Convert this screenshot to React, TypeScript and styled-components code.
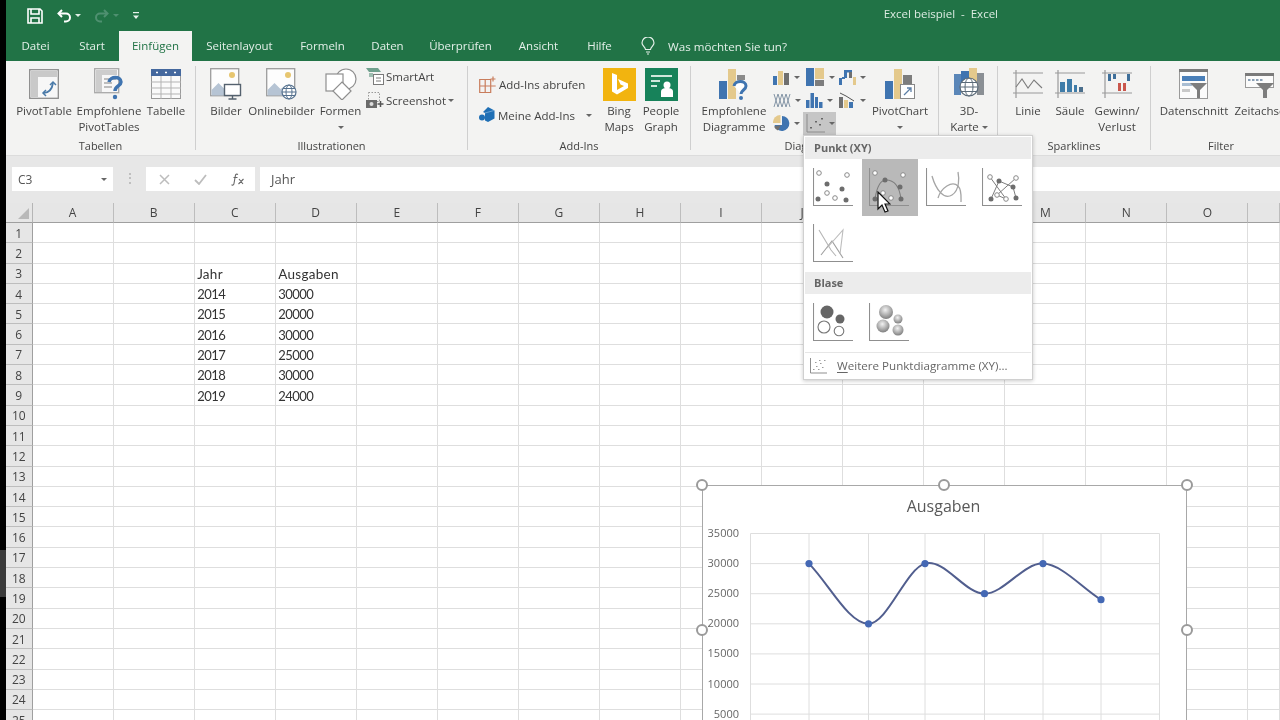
import React from 'react'
import styled, {createGlobalStyle} from 'styled-components'

const GlobalStyle = createGlobalStyle`
    html, body {
        margin: 0;
        padding: 0;
        background: #000;
    }
    * {
        box-sizing: border-box;
    }
`

const UI_FONT = '"Open Sans", "Noto Sans", "Liberation Sans", sans-serif'
const CELL_FONT = 'Lato, "Open Sans", sans-serif'
const GREEN = '#217346'
const RIBBON = '#f3f3f2'

const Screen = styled.div`
    position: relative;
    display: flex;
    width: 1280px;
    height: 720px;
    overflow: hidden;
    background: #fff;
    font-family: ${UI_FONT};
    filter: blur(0.5px);
`

const LeftStrip = styled.div`
    flex: none;
    width: 6px;
    background: #000;
`

const StripMark = styled.div`
    width: 100%;
    height: 47px;
    margin-top: 550px;
    background: #3a3a3a;
`

const Main = styled.div`
    flex: 1;
    min-width: 0;
    display: flex;
    flex-direction: column;
`

/* title bar */
const TitleBar = styled.div`
    flex: none;
    height: 31px;
    display: flex;
    align-items: center;
    padding-left: 21px;
    background: ${GREEN};
`

const Qat = styled.div`
    display: flex;
    align-items: center;
`

const TitleText = styled.div`
    margin-left: auto;
    margin-right: 282px;
    font-size: 11.5px;
    color: #dcebe2;
    white-space: pre;
    padding-bottom: 5px;
`

const Caret = styled.span<{$color?: string; $size?: number}>`
    display: inline-block;
    flex: none;
    width: 0;
    height: 0;
    border-left: ${p => p.$size ?? 3}px solid transparent;
    border-right: ${p => p.$size ?? 3}px solid transparent;
    border-top: ${p => p.$size ?? 3}px solid ${p => p.$color ?? '#666'};
`

const Spacer = styled.span<{$w: number}>`
    display: inline-block;
    width: ${p => p.$w}px;
`

/* tabs */
const TabBar = styled.div`
    flex: none;
    height: 30px;
    display: flex;
    align-items: stretch;
    background: ${GREEN};
`

const Tab = styled.div<{$w: number; $active?: boolean}>`
    width: ${p => p.$w}px;
    display: flex;
    align-items: center;
    justify-content: center;
    padding-bottom: 1px;
    font-size: 11.5px;
    color: ${p => (p.$active ? '#217346' : '#e3efe8')};
    background: ${p => (p.$active ? RIBBON : 'transparent')};
`

const TellMe = styled.div`
    display: flex;
    align-items: center;
    gap: 13px;
    margin-left: 15px;
    font-size: 11.6px;
    color: #e3efe8;
`

/* ribbon */
const Ribbon = styled.div`
    flex: none;
    height: 94px;
    display: flex;
    padding-top: 5px;
    background: ${RIBBON};
    color: #444;
    font-size: 11.5px;
`

const Group = styled.div<{$w: number}>`
    flex: none;
    width: ${p => p.$w}px;
    display: flex;
    flex-direction: column;
`

const GroupBody = styled.div<{$pad: number}>`
    height: 72px;
    display: flex;
    padding-left: ${p => p.$pad}px;
`

const GroupLabel = styled.div`
    height: 16px;
    line-height: 16px;
    text-align: center;
    font-size: 11px;
    color: #444;
    white-space: nowrap;
`

const Divider = styled.div`
    flex: none;
    width: 1px;
    height: 84px;
    background: #cfcfcf;
`

const LargeButton = styled.div<{$w: number}>`
    flex: none;
    width: ${p => p.$w}px;
    display: flex;
    flex-direction: column;
    align-items: center;
    white-space: nowrap;
    line-height: 16px;
`

const IconSlot = styled.div`
    height: 32px;
    margin: 2px 0 3px;
    display: flex;
    align-items: center;
    justify-content: center;
`

const CaretLine = styled.div`
    height: 16px;
    display: flex;
    align-items: center;
`

const SmallStack = styled.div<{$top: number; $gap: number; $w: number; $left?: number}>`
    flex: none;
    width: ${p => p.$w}px;
    display: flex;
    flex-direction: column;
    gap: ${p => p.$gap}px;
    padding-top: ${p => p.$top}px;
    padding-left: ${p => p.$left ?? 0}px;
`

const SmallButton = styled.div<{$iconGap?: number}>`
    height: 20px;
    display: flex;
    align-items: center;
    gap: ${p => p.$iconGap ?? 3}px;
    white-space: nowrap;
`

const ChartGrid = styled.div`
    flex: none;
    width: 99px;
    display: grid;
    grid-template-columns: repeat(3, 33px);
    grid-auto-rows: 23px;
    margin-left: 1px;
`

const ChartCell = styled.div<{$on?: boolean}>`
    display: flex;
    align-items: center;
    gap: 4px;
    padding-left: 3px;
    background: ${p => (p.$on ? '#c6c6c6' : 'transparent')};
`

/* formula bar */
const FormulaBar = styled.div`
    flex: none;
    height: 48px;
    display: flex;
    align-items: flex-start;
    padding: 11px 0 0 6px;
    background: #e7e7e7;
    border-top: 1px solid #dcdcdc;
`

const NameBox = styled.div`
    width: 101px;
    height: 24px;
    display: flex;
    align-items: center;
    justify-content: space-between;
    padding: 1px 6px 0;
    background: #fff;
    font-size: 12px;
    color: #555;
`

const Dots = styled.div`
    width: 33px;
    text-align: center;
    color: #aaa;
    font-size: 12px;
    line-height: 22px;
`

const FxBox = styled.div`
    width: 109px;
    height: 24px;
    display: flex;
    align-items: center;
    gap: 24px;
    padding-left: 13px;
    background: #fff;
`

const FormulaInput = styled.div`
    flex: 1;
    height: 24px;
    margin-left: 5px;
    padding-left: 11px;
    line-height: 25px;
    background: #fff;
    font-size: 13px;
    color: #555;
`

/* sheet */
const Sheet = styled.div`
    flex: 1;
    min-height: 0;
    display: grid;
    grid-template-columns: 26.5px repeat(15, 81.07px) 1fr;
    grid-template-rows: 20px;
    grid-auto-rows: 20.3px;
    background: #fff;
    overflow: hidden;
`

const Corner = styled.div`
    position: relative;
    background: #e6e6e6;
    border-right: 1px solid #b5b5b5;
    border-bottom: 1px solid #9f9f9f;

    &::after {
        content: '';
        position: absolute;
        right: 3px;
        bottom: 3px;
        border-left: 11px solid transparent;
        border-bottom: 11px solid #b9b9b9;
    }
`

const ColHead = styled.div`
    display: flex;
    align-items: center;
    justify-content: center;
    background: #e6e6e6;
    border-right: 1px solid #bdbdbd;
    border-bottom: 1px solid #9f9f9f;
    font-size: 12px;
    color: #444;
`

const RowHead = styled.div`
    display: flex;
    align-items: center;
    justify-content: center;
    padding-top: 1px;
    background: #e6e6e6;
    border-right: 1px solid #9f9f9f;
    border-bottom: 1px solid #bdbdbd;
    font-size: 12px;
    color: #444;
`

const Cell = styled.div<{$num?: boolean}>`
    display: flex;
    align-items: center;
    padding: 1px 0 0 2.5px;
    border-right: 1px solid #dedede;
    border-bottom: 1px solid #dedede;
    font-family: ${CELL_FONT};
    font-size: ${p => (p.$num ? 13 : 13.5)}px;
    letter-spacing: ${p => (p.$num ? -0.5 : 0.3)}px;
    color: #333;
    white-space: nowrap;
`

/* scatter gallery */
const Gallery = styled.div`
    position: absolute;
    left: 803px;
    top: 135px;
    width: 230px;
    height: 245px;
    padding: 1px;
    background: #fff;
    border: 1px solid #d0d0d0;
    box-shadow: 0 1px 4px rgba(0, 0, 0, 0.22);
`

const GalleryHead = styled.div`
    height: 22px;
    padding-left: 9px;
    line-height: 22px;
    font-size: 11px;
    font-weight: 700;
    color: #666;
    background: #ececec;
`

const TileRow = styled.div`
    display: grid;
    grid-template-columns: repeat(4, 56.5px);
    grid-auto-rows: 56.5px;
`

const Tile = styled.div<{$on?: boolean}>`
    position: relative;
    display: flex;
    align-items: center;
    justify-content: center;
    background: ${p => (p.$on ? '#b9b9b9' : 'transparent')};
`

const Pointer = styled.svg`
    position: absolute;
    left: 15px;
    top: 32px;
`

const GalleryFoot = styled.div`
    height: 27px;
    margin-top: 1px;
    display: flex;
    align-items: center;
    gap: 9px;
    padding-left: 5px;
    border-top: 1px solid #e6e6e6;
    font-size: 11.6px;
    color: #666;

    u {
        text-underline-offset: 2px;
    }
`

/* chart */
const ChartFrame = styled.div`
    position: absolute;
    left: 702px;
    top: 485px;
    width: 485px;
    height: 300px;
    background: #fff;
    border: 1.5px solid #a8a8a8;
`

const ChartTitle = styled.div`
    height: 40px;
    line-height: 41px;
    text-align: center;
    font-size: 16px;
    color: #595959;
    margin-right: 2px;
`

const Handle = styled.div<{$x: number; $y: number}>`
    position: absolute;
    left: ${p => p.$x - 6}px;
    top: ${p => p.$y - 6}px;
    width: 12px;
    height: 12px;
    border-radius: 50%;
    background: #fff;
    border: 2px solid #9a9a9a;
`

/* ------ icons ------ */
const BLUE = '#3f74b0'
const TAN = '#e4c98c'

const SaveIcon = () => (
    <svg width="16" height="16" viewBox="0 0 16 16" fill="none" stroke="#fff" strokeWidth="1.6">
        <path d="M1 1h12l2 2v12H1z" />
        <path d="M4 1v5h8V1M4 15v-5h8v5" />
    </svg>
)

const UndoIcon = ({color}: {color: string}) => (
    <svg width="15" height="14" viewBox="0 0 15 14" fill="none" stroke={color} strokeWidth="2">
        <path d="M5 1 1.5 4.5 5 8" />
        <path d="M2 4.5h7a4 4 0 0 1 0 8H7" />
    </svg>
)

const RedoIcon = ({color}: {color: string}) => (
    <svg width="15" height="14" viewBox="0 0 15 14" fill="none" stroke={color} strokeWidth="2">
        <path d="M10 1l3.5 3.5L10 8" />
        <path d="M13 4.5H6a4 4 0 0 0 0 8h2" />
    </svg>
)

const CustomizeIcon = () => (
    <svg width="6" height="8" viewBox="0 0 6 8" fill="#e8f2ec">
        <rect x="0" y="0" width="6" height="1.2" />
        <path d="M0 3.5h6L3 7z" />
    </svg>
)

const BulbIcon = () => (
    <svg width="14" height="18" viewBox="0 0 14 18" fill="none" stroke="#e3efe8" strokeWidth="1.2">
        <path d="M4.5 12.5C4 10 1 8.5 1 6a6 6 0 0 1 12 0c0 2.5-3 4-3.5 6.5z" />
        <path d="M5 15h4M6 17h2" />
    </svg>
)

const PivotIcon = () => (
    <svg width="30" height="30" viewBox="0 0 30 30" fill="none">
        <rect x=".7" y=".7" width="28.6" height="28.6" fill="#f7f7f7" stroke="#8c8c8c" strokeWidth="1.3" />
        <path d="M2 2h26v6H2zM2 8h7v20H2z" fill="#c9c9c9" />
        <path d="M14 24c6 0 9-3 10-10" stroke="#4a7aa8" strokeWidth="1.8" />
        <path d="M21 16l3-3 3 3M17 21l-3 3 3 3" stroke="#4a7aa8" strokeWidth="1.5" />
    </svg>
)

const RecommendIcon = () => (
    <svg width="30" height="32" viewBox="0 0 30 32" fill="none">
        <rect x=".7" y=".7" width="24" height="24" fill="#f7f7f7" stroke="#a8a8a8" strokeWidth="1.3" />
        <path d="M2 2h21v5H2zM2 7h6v17H2z" fill="#cdcdcd" />
        <path d="M10 11h12M10 15h8M10 19h8" stroke="#bdbdbd" strokeWidth="2" />
        <path d="M15 14c1-6 12-6 12 0 0 4-6 4-6 9" stroke="#3f74b0" strokeWidth="3.5" />
        <circle cx="21" cy="29" r="2.2" fill="#3f74b0" />
    </svg>
)

const TableIcon = () => (
    <svg width="30" height="30" viewBox="0 0 30 30" fill="none">
        <rect x=".5" y=".5" width="29" height="29" fill="#fafafa" stroke="#9a9a9a" />
        <rect x="0" y="0" width="30" height="7" fill="#44689e" />
        <path d="M5 3.5h2M14 3.5h2M23 3.5h2" stroke="#fff" strokeWidth="1.5" />
        <path d="M0 13h30M0 19h30M0 25h30M10 7v23M20 7v23" stroke="#b3b3b3" />
    </svg>
)

const PictureBase = () => (
    <>
        <rect x=".7" y=".7" width="28" height="27" fill="#fdfdfd" stroke="#9c9c9c" strokeWidth="1.3" />
        <circle cx="22" cy="7" r="3" fill="#e7c670" />
        <path d="M1.5 27.5V22l7-7 6 6 3-2 4 8.5z" fill="#b6c4d4" />
    </>
)

const PicturesIcon = () => (
    <svg width="32" height="32" viewBox="0 0 32 32" fill="none">
        <PictureBase />
        <rect x="14.5" y="16.5" width="16" height="11" fill="#fff" stroke="#54616e" strokeWidth="1.4" />
        <path d="M22.5 28v3M18.5 31h8" stroke="#54616e" strokeWidth="1.4" />
    </svg>
)

const OnlinePicturesIcon = () => (
    <svg width="32" height="32" viewBox="0 0 32 32" fill="none">
        <PictureBase />
        <circle cx="23" cy="24" r="7" fill="#fff" stroke="#54708e" strokeWidth="1.2" />
        <ellipse cx="23" cy="24" rx="3" ry="7" stroke="#54708e" />
        <path d="M16 24h14M17 20.5h12M17 27.5h12" stroke="#54708e" />
    </svg>
)

const ShapesIcon = () => (
    <svg width="32" height="32" viewBox="0 0 32 32" fill="none" stroke="#8f8f8f" strokeWidth="1.2">
        <circle cx="21" cy="11" r="10" fill="#fff" />
        <rect x="1" y="6" width="17" height="17" fill="#fff" />
        <path d="M17 14l9 9-9 9-9-9z" fill="#fff" />
    </svg>
)

const SmartArtIcon = () => (
    <svg width="18" height="18" viewBox="0 0 18 18" fill="none">
        <path d="M0 1h12l3 4H3z" fill="#6fa08d" />
        <path d="M3 6h4v4H3z" fill="#9dbdb0" />
        <rect x="7.5" y="7.5" width="10" height="10" fill="#fff" stroke="#7a7a7a" />
        <path d="M10 11h5M10 14h5" stroke="#7a7a7a" />
    </svg>
)

const ScreenshotIcon = () => (
    <svg width="18" height="18" viewBox="0 0 18 18" fill="none">
        <rect x="2.5" y="1.5" width="11" height="9" stroke="#999" strokeDasharray="1.5 1.5" />
        <rect x="0" y="9" width="11" height="8" fill="#6b6b6b" />
        <circle cx="5.5" cy="13" r="2" fill="#ddd" />
        <path d="M14.5 10v6M11.5 13h6" stroke="#555" strokeWidth="1.5" />
    </svg>
)

const AddInStoreIcon = () => (
    <svg width="17" height="17" viewBox="0 0 17 17" fill="none" stroke="#c97d5c" strokeWidth="1.2">
        <path d="M.7 3.5h11v13H.7zM.7 10h11M6.2 3.5v13M11.7 10h5M14 .5v5M11.5 3h5" />
    </svg>
)

const MyAddInIcon = () => (
    <svg width="16" height="16" viewBox="0 0 16 16">
        <path d="M9 0l6.5 3.5v8L9 15l-3-1.5V6l-2-1z" fill="#1f6fb5" />
        <circle cx="3" cy="10.5" r="3" fill="#1f6fb5" />
        <path d="M6 6l9-2.5" stroke="#7fb0dc" strokeWidth=".8" />
    </svg>
)

const BingTile = () => (
    <svg width="33" height="33" viewBox="0 0 33 33">
        <rect width="33" height="33" fill="#f2b40f" />
        <path d="M9 5l5 2v15l7-4-3.5-1.5L15 11l10 4.5V20l-11 6.5-5-3z" fill="#fff" />
    </svg>
)

const PeopleTile = () => (
    <svg width="33" height="33" viewBox="0 0 33 33">
        <rect width="33" height="33" fill="#17825a" />
        <path d="M6 7h21v2H6zM6 12h9v2H6zM6 17h6v2H6z" fill="#cfe7dc" />
        <circle cx="22" cy="17" r="3.5" fill="#fff" />
        <path d="M16 29v-5c0-3 2-4 6-4s6 1 6 4v5z" fill="#fff" />
    </svg>
)

const BigBars = () => (
    <>
        <rect x="0" y="13" width="8" height="18" fill={BLUE} />
        <rect x="9" y="1" width="8" height="30" fill={TAN} />
    </>
)

const RecommendChartIcon = () => (
    <svg width="30" height="32" viewBox="0 0 30 32" fill="none">
        <BigBars />
        <rect x="18" y="7" width="8" height="5" fill="#8a8a8a" />
        <path d="M15 18c1-6 12-6 12 0 0 4-5 4-5 8" stroke="#3f74b0" strokeWidth="3" fill="#fff" />
        <circle cx="22" cy="30" r="2" fill="#3f74b0" />
    </svg>
)

const PivotChartIcon = () => (
    <svg width="30" height="32" viewBox="0 0 30 32" fill="none">
        <BigBars />
        <rect x="18" y="7" width="9" height="10" fill="#7d7d7d" />
        <rect x="15.5" y="16.5" width="14" height="14" fill="#fff" stroke="#888" />
        <path d="M19 27l7-7M22 20h4v4" stroke="#5c7fa6" strokeWidth="1.3" />
    </svg>
)

const MiniColumns = () => (
    <svg width="17" height="17" viewBox="0 0 17 17">
        <rect x="0" y="7" width="4" height="9" fill={BLUE} />
        <rect x="5" y="2" width="5" height="14" fill={TAN} />
        <rect x="11" y="4" width="5" height="12" fill="#6f6f6f" />
    </svg>
)

const MiniTreemap = () => (
    <svg width="19" height="19" viewBox="0 0 19 19">
        <rect x="0" y="0" width="8" height="18" fill={BLUE} />
        <rect x="9" y="0" width="9" height="11" fill={TAN} />
        <rect x="9" y="12" width="9" height="6" fill="#7d7d7d" />
    </svg>
)

const MiniWaterfall = () => (
    <svg width="17" height="17" viewBox="0 0 17 17">
        <rect x="0" y="9" width="3" height="7" fill={BLUE} />
        <rect x="3" y="8" width="3" height="2" fill={BLUE} />
        <rect x="5" y="1" width="3" height="8" fill={BLUE} />
        <rect x="8" y="1" width="5" height="2.5" fill={BLUE} />
        <rect x="10" y="3" width="3" height="6" fill="#6f6f6f" />
        <rect x="14" y="8" width="3" height="8" fill={TAN} />
    </svg>
)

const MiniStock = () => (
    <svg width="18" height="17" viewBox="0 0 18 17" fill="none" stroke="#8495a6" strokeWidth="1">
        <path d="M1 2l4 13 4-13 4 13 4-13M1 15l4-13 4 13 4-13 4 13" />
    </svg>
)

const MiniHisto = () => (
    <svg width="17" height="17" viewBox="0 0 17 17" fill={BLUE}>
        <rect x="0" y="8" width="3.5" height="8" />
        <rect x="4.5" y="1" width="3.5" height="15" />
        <rect x="9" y="5" width="3" height="11" />
        <rect x="13" y="10" width="3.5" height="6" />
    </svg>
)

const MiniPareto = () => (
    <svg width="17" height="17" viewBox="0 0 17 17">
        <rect x="0" y="5" width="4" height="11" fill="#6f6f6f" />
        <rect x="5" y="8" width="4" height="8" fill={TAN} />
        <rect x="10" y="10" width="4" height="6" fill={BLUE} />
        <path d="M1 1l6 3 8 5" fill="none" stroke="#555" />
    </svg>
)

const MiniPie = () => (
    <svg width="17" height="17" viewBox="0 0 17 17">
        <path d="M9 1a7.5 7.5 0 1 1-7.5 9H9z" fill={BLUE} />
        <path d="M7.5 0v8H0A7.5 7.5 0 0 1 7.5 0z" fill={TAN} />
        <path d="M1 11.5A7 7 0 0 0 5 15.5L8 10z" fill="#6f6f6f" />
    </svg>
)

const MiniScatter = () => (
    <svg width="19" height="19" viewBox="0 0 19 19" fill="#666">
        <path d="M1 0v18h18" fill="none" stroke="#8c8c8c" />
        <rect x="4" y="13" width="2" height="1.5" />
        <rect x="9" y="7" width="2" height="1.5" />
        <rect x="13" y="10" width="2" height="1.5" />
        <rect x="15" y="4" width="2" height="1.5" />
    </svg>
)

const MapIcon = () => (
    <svg width="30" height="32" viewBox="0 0 30 32" fill="none">
        <rect x="0" y="6" width="7" height="21" fill="#5a86b8" />
        <rect x="23" y="5" width="7" height="22" fill="#8a8f94" />
        <rect x="7" y="3" width="8" height="15" fill={BLUE} />
        <rect x="15" y="0" width="8" height="16" fill={TAN} />
        <circle cx="15" cy="19" r="9" fill="#fff" stroke="#5a6a78" strokeWidth="1.2" />
        <ellipse cx="15" cy="19" rx="4" ry="9" stroke="#5a6a78" />
        <path d="M6 19h18M7.5 14.5h15M7.5 23.5h15" stroke="#5a6a78" />
    </svg>
)

const SparkFrame = () => (
    <path d="M0 4h30M0 24h30M3 1v28" fill="none" stroke="#9a9a9a" strokeWidth="1.2" />
)

const SparkLine = () => (
    <svg width="30" height="30" viewBox="0 0 30 30" fill="none">
        <SparkFrame />
        <path d="M3 18l6-8 6 9 6-8 8 8" stroke="#7c7c7c" strokeWidth="1.1" />
    </svg>
)

const SparkColumn = () => (
    <svg width="30" height="30" viewBox="0 0 30 30" fill="none">
        <SparkFrame />
        <rect x="5" y="13" width="5" height="10" fill="#3f7ca8" />
        <rect x="12" y="10" width="5" height="13" fill="#3f7ca8" />
        <rect x="19" y="16" width="3" height="7" fill="#3f7ca8" />
        <rect x="24" y="18" width="4" height="5" fill="#4a6e8c" />
    </svg>
)

const SparkWinLoss = () => (
    <svg width="30" height="30" viewBox="0 0 30 30" fill="none">
        <SparkFrame />
        <path d="M6 5h3v7H6zM11 5h3v5h-3zM25 5h3v7h-3z" fill="#3f6f9a" />
        <path d="M16 14h3v8h-3zM21 14h3v8h-3z" fill="#c9564c" />
    </svg>
)

const SlicerIcon = () => (
    <svg width="30" height="30" viewBox="0 0 30 30" fill="none">
        <rect x=".5" y=".5" width="28" height="29" fill="#fbfbfb" stroke="#9a9a9a" />
        <rect x="0" y="0" width="29" height="3" fill="#7a7a7a" />
        <rect x="3" y="7" width="23" height="5" fill="#4a7fb8" />
        <rect x="3" y="14" width="10" height="3" fill="#a9bdd2" />
        <rect x="3" y="20" width="8" height="3" fill="#c9c9c9" />
        <path d="M11 14h17l-7 7v8h-3v-8z" fill="#7d7d7d" />
    </svg>
)

const TimelineIcon = () => (
    <svg width="30" height="30" viewBox="0 0 30 30" fill="none">
        <rect x=".5" y="4.5" width="28" height="14" fill="#fbfbfb" stroke="#9a9a9a" />
        <rect x="0" y="4" width="29" height="3" fill="#7a7a7a" />
        <path d="M3 11h16" stroke="#8a9fb5" strokeWidth="2" strokeDasharray="2.5 1.5" />
        <path d="M11 14h18l-7 7v8h-4v-8z" fill="#7d7d7d" />
    </svg>
)

const Axis = () => <path d="M.5 0v37.5H40" fill="none" stroke="#8f8f8f" strokeWidth="1.1" />

const Dot = ({x, y, open}: {x: number; y: number; open?: boolean}) => (
    <circle
        cx={x}
        cy={y}
        r={open ? 2.3 : 2.5}
        fill={open ? '#fff' : '#6d6d6d'}
        stroke={open ? '#8a8a8a' : 'none'}
        strokeWidth="1"
    />
)

const PlotIcon: React.FC<{children?: React.ReactNode}> = ({children}) => (
    <svg width="41" height="39" viewBox="0 0 41 39" fill="none">
        <Axis />
        {children}
    </svg>
)

const openPts = [[6, 5], [34, 7], [14, 25], [22, 30]]
const solidPts = [[14, 16], [29, 21], [5, 31], [33, 32]]

const ScatterDots = () => (
    <PlotIcon>
        {openPts.map(([x, y]) => <Dot key={x} x={x} y={y} open />)}
        {solidPts.map(([x, y]) => <Dot key={x} x={x} y={y} />)}
    </PlotIcon>
)

const ScatterSmooth = () => (
    <PlotIcon>
        <path d="M6 31C8 18 12 12 17 12c6 0 13 3 15 19" stroke="#7d7d7d" strokeWidth="1.1" />
        {openPts.map(([x, y]) => <Dot key={x} x={x} y={y} open />)}
        <Dot x={16} y={12} />
        <Dot x={31} y={19} />
        <Dot x={6} y={31} />
        <Dot x={32} y={31} />
    </PlotIcon>
)

const ScatterCurves = () => (
    <PlotIcon>
        <path d="M6 8c4 14 12 24 20 19 8-5 7-18 6-23" stroke="#a5a5a5" strokeWidth="1.3" />
        <path d="M12 30c3-10 14-18 20-12 4 4 3 12 3 16" stroke="#a5a5a5" strokeWidth="1.3" />
    </PlotIcon>
)

const ScatterLines = () => (
    <PlotIcon>
        <path d="M9 31 17 13 31 19 34 30" stroke="#7d7d7d" />
        <path d="M8 9l16 22-9-4L34 10" stroke="#7d7d7d" />
        <Dot x={8} y={9} open />
        <Dot x={34} y={10} open />
        <Dot x={15} y={27} open />
        <Dot x={24} y={31} open />
        <Dot x={17} y={13} />
        <Dot x={31} y={19} />
        <Dot x={9} y={31} />
        <Dot x={34} y={30} />
    </PlotIcon>
)

const ScatterStraight = () => (
    <PlotIcon>
        <path d="M6 6l12 20 5 6" stroke="#b5b5b5" strokeWidth="1.1" />
        <path d="M8 31 19 17l11 17" stroke="#a0a0a0" strokeWidth="1.1" />
        <path d="M14 24l16-18-3 24" stroke="#bdbdbd" strokeWidth="1.1" />
    </PlotIcon>
)

const BubbleFlat = () => (
    <PlotIcon>
        <circle cx="14" cy="9" r="6.5" fill="#666" />
        <circle cx="27" cy="16" r="4.5" fill="#666" />
        <circle cx="11" cy="24" r="6" fill="#fff" stroke="#777" strokeWidth="1.1" />
        <circle cx="26" cy="28" r="4.8" fill="#fff" stroke="#777" strokeWidth="1.1" />
    </PlotIcon>
)

const BubbleBall = () => (
    <PlotIcon>
        <defs>
            <radialGradient id="ball" cx="45%" cy="35%" r="65%">
                <stop offset="0%" stopColor="#f2f2f2" />
                <stop offset="100%" stopColor="#7f7f7f" />
            </radialGradient>
        </defs>
        <circle cx="17" cy="9" r="7" fill="url(#ball)" />
        <circle cx="29" cy="16" r="4.5" fill="url(#ball)" />
        <circle cx="14" cy="23" r="6.5" fill="url(#ball)" />
        <circle cx="29" cy="27" r="5.5" fill="url(#ball)" />
    </PlotIcon>
)

const MoreScatterIcon = () => (
    <svg width="18" height="17" viewBox="0 0 18 17" fill="#9a9a9a">
        <path d="M.5 1v15H17" fill="none" stroke="#8f8f8f" />
        <path d="M3 12h1.5v1H3zM6 9h1.5v1H6zM8 12h1.5v1H8zM10 6h1.5v1H10zM12 10h1.5v1H12zM14 3h1.5v1H14zM5 5h1.5v1H5zM9 3h1.5v1H9z" />
    </svg>
)

/* ------ chart ------ */
const plotTop = 7.5
const plotLeft = 47.5
const plotRight = 456.5
const xs = [106, 165.5, 222, 281.5, 340, 398]
const gridXs = [47.5, ...xs, plotRight]
const toY = (v: number) => plotTop + ((35000 - v) / 5000) * 30.1
const values = [30000, 20000, 30000, 25000, 30000, 24000]
const ticks = [35000, 30000, 25000, 20000, 15000, 10000, 5000, 0]

const curve = xs.reduce((d, x, i) => {
    const y = toY(values[i])
    if (i === 0) return `M${x} ${y}`
    const px = xs[i - 1]
    const py = toY(values[i - 1])
    const prevSlope = i > 1 ? (y - toY(values[i - 2])) / (x - xs[i - 2]) : (y - py) / (x - px)
    const nextSlope = i < xs.length - 1 ? (toY(values[i + 1]) - py) / (xs[i + 1] - px) : (y - py) / (x - px)
    const t = (x - px) / 3
    return `${d} C${px + t} ${py + prevSlope * t} ${x - t} ${y - nextSlope * t} ${x} ${y}`
}, '')

const LineChart = () => (
    <svg width="482" height="260" viewBox="0 0 482 260" fill="none">
        {ticks.map(t => (
            <g key={t}>
                <line x1={plotLeft} x2={plotRight} y1={toY(t)} y2={toY(t)} stroke="#dedede" />
                <text x="36" y={toY(t) + 3.5} textAnchor="end" fontSize="11" fill="#666" fontFamily={UI_FONT}>{t}</text>
            </g>
        ))}
        {gridXs.map(x => <line key={x} x1={x} x2={x} y1={plotTop} y2={260} stroke="#dedede" />)}
        <path d={curve} stroke="#515e8e" strokeWidth="2" />
        {xs.map((x, i) => <circle key={x} cx={x} cy={toY(values[i])} r="3.6" fill="#4468b4" />)}
    </svg>
)

/* ------ data ------ */
const tabs = [
    {label: 'Datei', w: 59},
    {label: 'Start', w: 54},
    {label: 'Einfügen', w: 73, active: true},
    {label: 'Seitenlayout', w: 95},
    {label: 'Formeln', w: 71},
    {label: 'Daten', w: 59},
    {label: 'Überprüfen', w: 87},
    {label: 'Ansicht', w: 69},
    {label: 'Hilfe', w: 53},
]

const columns = 'ABCDEFGHIJKLMNO'.split('')
const rowCount = 25

const cellText: Record<string, string> = {
    C3: 'Jahr', D3: 'Ausgaben',
    C4: '2014', D4: '30000',
    C5: '2015', D5: '20000',
    C6: '2016', D6: '30000',
    C7: '2017', D7: '25000',
    C8: '2018', D8: '30000',
    C9: '2019', D9: '24000',
}

const handles = [[0, 0], [242, 0], [485, 0], [0, 145], [485, 145]]

const Big: React.FC<{w: number; icon: React.ReactNode; lines: string[]; caret?: boolean; inlineCaret?: boolean}> = ({w, icon, lines, caret, inlineCaret}) => (
    <LargeButton $w={w}>
        <IconSlot>{icon}</IconSlot>
        {lines.map((line, i) => (
            <div key={line}>
                {line}
                {inlineCaret && i === lines.length - 1 && <> <Caret style={{verticalAlign: 2}} /></>}
            </div>
        ))}
        {caret && <CaretLine><Caret /></CaretLine>}
    </LargeButton>
)

export default function App() {
    return (
        <>
            <GlobalStyle />
            <Screen>
                <LeftStrip><StripMark /></LeftStrip>
                <Main>
                    <TitleBar>
                        <Qat>
                            <SaveIcon />
                            <Spacer $w={14} />
                            <UndoIcon color="#fff" />
                            <Spacer $w={3} />
                            <Caret $color="#dfeee5" />
                            <Spacer $w={13} />
                            <RedoIcon color="#4f9070" />
                            <Spacer $w={4} />
                            <Caret $color="#4f9070" />
                            <Spacer $w={14} />
                            <CustomizeIcon />
                        </Qat>
                        <TitleText>Excel beispiel  -  Excel</TitleText>
                    </TitleBar>

                    <TabBar>
                        {tabs.map(t => <Tab key={t.label} $w={t.w} $active={t.active}>{t.label}</Tab>)}
                        <TellMe><BulbIcon />Was möchten Sie tun?</TellMe>
                    </TabBar>

                    <Ribbon>
                        <Group $w={189}>
                            <GroupBody $pad={7}>
                                <Big w={62} icon={<PivotIcon />} lines={['PivotTable']} />
                                <Big w={68} icon={<RecommendIcon />} lines={['Empfohlene', 'PivotTables']} />
                                <Big w={46} icon={<TableIcon />} lines={['Tabelle']} />
                            </GroupBody>
                            <GroupLabel>Tabellen</GroupLabel>
                        </Group>
                        <Divider />
                        <Group $w={271}>
                            <GroupBody $pad={11}>
                                <Big w={38} icon={<PicturesIcon />} lines={['Bilder']} />
                                <Big w={73} icon={<OnlinePicturesIcon />} lines={['Onlinebilder']} />
                                <Big w={45} icon={<ShapesIcon />} lines={['Formen']} caret />
                                <SmallStack $top={0} $gap={4} $w={100} $left={3}>
                                    <SmallButton $iconGap={2}><SmartArtIcon />SmartArt</SmallButton>
                                    <SmallButton $iconGap={2}><ScreenshotIcon />Screenshot <Caret /></SmallButton>
                                </SmallStack>
                            </GroupBody>
                            <GroupLabel>Illustrationen</GroupLabel>
                        </Group>
                        <Divider />
                        <Group $w={222}>
                            <GroupBody $pad={11}>
                                <SmallStack $top={8} $gap={11} $w={120}>
                                    <SmallButton $iconGap={3}><AddInStoreIcon />Add-Ins abrufen</SmallButton>
                                    <SmallButton $iconGap={3}><MyAddInIcon />Meine Add-Ins<Spacer $w={5} /><Caret /></SmallButton>
                                </SmallStack>
                                <Big w={40} icon={<BingTile />} lines={['Bing', 'Maps']} />
                                <Big w={44} icon={<PeopleTile />} lines={['People', 'Graph']} />
                            </GroupBody>
                            <GroupLabel>Add-Ins</GroupLabel>
                        </Group>
                        <Divider />
                        <Group $w={247}>
                            <GroupBody $pad={8}>
                                <Big w={70} icon={<RecommendChartIcon />} lines={['Empfohlene', 'Diagramme']} />
                                <ChartGrid>
                                    <ChartCell><MiniColumns /><Caret /></ChartCell>
                                    <ChartCell><MiniTreemap /><Caret /></ChartCell>
                                    <ChartCell><MiniWaterfall /><Caret /></ChartCell>
                                    <ChartCell><MiniStock /><Caret /></ChartCell>
                                    <ChartCell><MiniHisto /><Caret /></ChartCell>
                                    <ChartCell><MiniPareto /><Caret /></ChartCell>
                                    <ChartCell><MiniPie /><Caret /></ChartCell>
                                    <ChartCell $on><MiniScatter /><Caret /></ChartCell>
                                </ChartGrid>
                                <Big w={62} icon={<PivotChartIcon />} lines={['PivotChart']} caret />
                            </GroupBody>
                            <GroupLabel>Diagramme</GroupLabel>
                        </Group>
                        <Divider />
                        <Group $w={58}>
                            <GroupBody $pad={8}>
                                <Big w={44} icon={<MapIcon />} lines={['3D-', 'Karte']} inlineCaret />
                            </GroupBody>
                        </Group>
                        <Divider />
                        <Group $w={152}>
                            <GroupBody $pad={10}>
                                <Big w={40} icon={<SparkLine />} lines={['Linie']} />
                                <Big w={44} icon={<SparkColumn />} lines={['Säule']} />
                                <Big w={50} icon={<SparkWinLoss />} lines={['Gewinn/', 'Verlust']} />
                            </GroupBody>
                            <GroupLabel>Sparklines</GroupLabel>
                        </Group>
                        <Divider />
                        <Group $w={140}>
                            <GroupBody $pad={7}>
                                <Big w={72} icon={<SlicerIcon />} lines={['Datenschnitt']} />
                                <Big w={60} icon={<TimelineIcon />} lines={['Zeitachse']} />
                            </GroupBody>
                            <GroupLabel>Filter</GroupLabel>
                        </Group>
                    </Ribbon>

                    <FormulaBar>
                        <NameBox>C3<Caret /></NameBox>
                        <Dots>⋮</Dots>
                        <FxBox>
                            <svg width="11" height="11" viewBox="0 0 11 11" fill="none" stroke="#bdbdbd" strokeWidth="1.5">
                                <path d="M1 1l9 9M10 1l-9 9" />
                            </svg>
                            <svg width="13" height="11" viewBox="0 0 13 11" fill="none" stroke="#bdbdbd" strokeWidth="1.8">
                                <path d="M1 6l4 4 7-9" />
                            </svg>
                            <svg width="14" height="13" viewBox="0 0 14 13" fill="none" stroke="#666" strokeWidth="1.1">
                                <path d="M7 1.5C5.5.5 4.5 1.5 4.3 3L3 10.5C2.8 12 1.5 12.5.5 11.8M2.5 4.5h4M8 6l4 5M12.5 6l-5 5" />
                            </svg>
                        </FxBox>
                        <FormulaInput>Jahr</FormulaInput>
                    </FormulaBar>

                    <Sheet>
                        <Corner />
                        {columns.map(c => <ColHead key={c}>{c}</ColHead>)}
                        <ColHead />
                        {Array.from({length: rowCount}, (_, r) => (
                            <React.Fragment key={r}>
                                <RowHead>{r + 1}</RowHead>
                                {columns.map(c => {
                                    const text = cellText[`${c}${r + 1}`]
                                    return <Cell key={c} $num={/^\d+$/.test(text ?? '')}>{text}</Cell>
                                })}
                                <Cell />
                            </React.Fragment>
                        ))}
                    </Sheet>
                </Main>

                <Gallery>
                    <GalleryHead>Punkt (XY)</GalleryHead>
                    <TileRow>
                        <Tile><ScatterDots /></Tile>
                        <Tile $on>
                            <ScatterSmooth />
                            <Pointer width="14" height="23" viewBox="0 0 14 23">
                                <path d="M1 1v17l4-4 3 7 3-1-3-7h5z" fill="#fff" stroke="#111" strokeWidth="1.2" />
                            </Pointer>
                        </Tile>
                        <Tile><ScatterCurves /></Tile>
                        <Tile><ScatterLines /></Tile>
                        <Tile><ScatterStraight /></Tile>
                    </TileRow>
                    <GalleryHead>Blase</GalleryHead>
                    <TileRow>
                        <Tile><BubbleFlat /></Tile>
                        <Tile><BubbleBall /></Tile>
                    </TileRow>
                    <GalleryFoot>
                        <MoreScatterIcon />
                        <span><u>W</u>eitere Punktdiagramme (XY)...</span>
                    </GalleryFoot>
                </Gallery>

                <ChartFrame>
                    <ChartTitle>Ausgaben</ChartTitle>
                    <LineChart />
                </ChartFrame>
                {handles.map(([x, y]) => <Handle key={`${x}-${y}`} $x={702 + x} $y={485 + y} />)}
            </Screen>
        </>
    )
}
